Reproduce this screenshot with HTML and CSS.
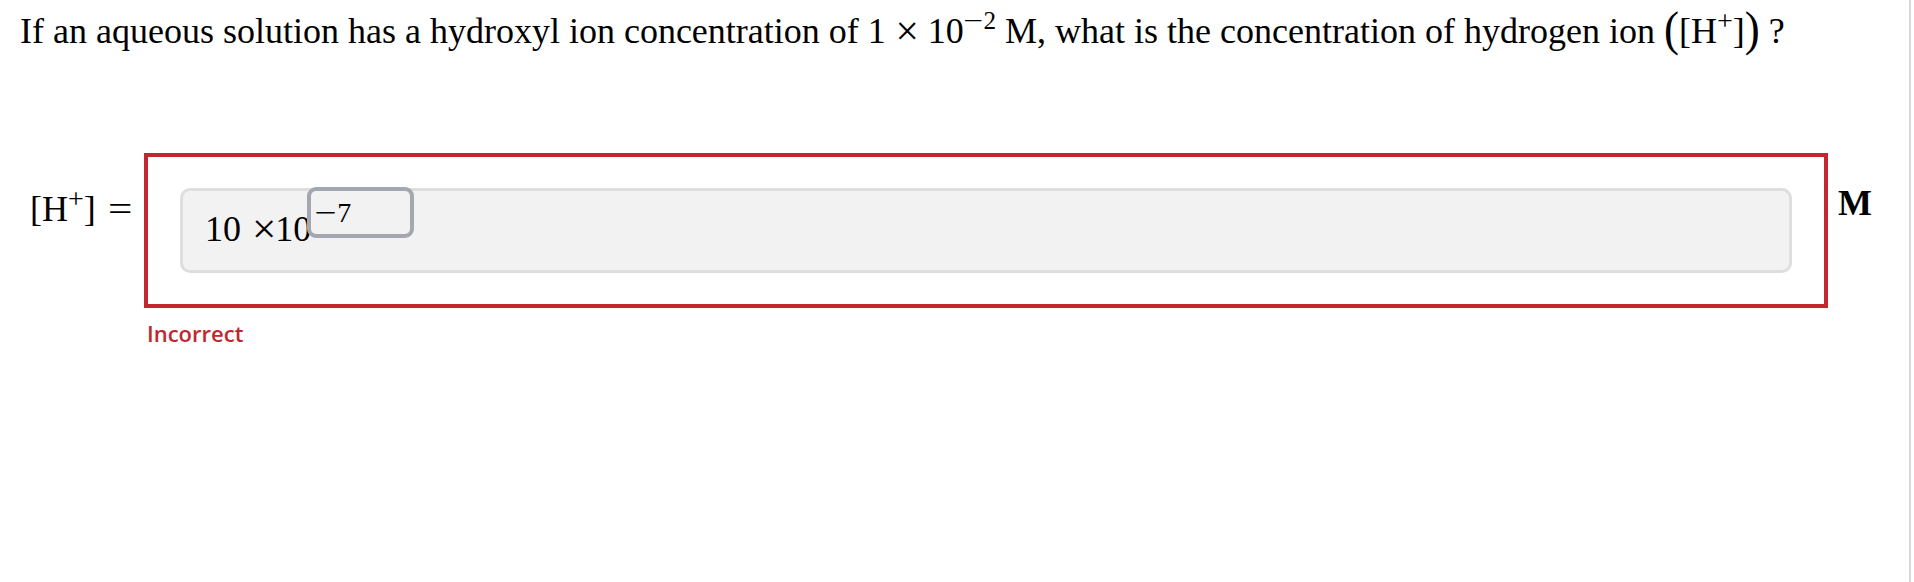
FILE: index.html
```html
<!doctype html>
<html lang="en">
<head>
    <meta charset="UTF-8">
    <title>Hydrogen ion concentration</title>
    <link rel="stylesheet" href="styles.css">
</head>
<body>
<div class="page">
    <p class="question">If an aqueous solution has a hydroxyl ion concentration of <span class="math">1<span class="op">×</span>10<sup><span class="minus">−</span>2</sup> M</span>, what is the concentration of hydrogen ion <span class="math"><span class="paren">(</span>[H<sup class="plus">+</sup>]<span class="paren">)</span></span> ?</p>

    <div class="answer-row">
        <div class="label">[H<sup class="plus">+</sup>]<span class="eq">=</span></div>
        <div class="answer-box">
            <div class="mathfield">
                <span class="entry">10 <span class="times">×</span>10</span>
                <span class="exponent"><span class="minus">−</span>7</span>
            </div>
        </div>
        <div class="unit">M</div>
    </div>
    <div class="feedback">Incorrect</div>
</div>
</body>
</html>
```

FILE: styles.css
```css
body {
    margin: 0;
    background-color: #fff;
    color: #000;
    font-family: "Liberation Serif", "Times New Roman", serif;
}

.page {
    width: 1909px;
    height: 582px;
    border-right: 2px solid #d9d9d9;
    box-sizing: content-box;
}

.question {
    margin: 0;
    padding: 11px 0 0 20px;
    font-size: 36px;
    line-height: 41px;
    white-space: nowrap;
}

sup {
    font-size: 0.7em;
    line-height: 0;
    vertical-align: 0.55em;
}

sup.plus {
    font-size: 0.78em;
    vertical-align: 0.45em;
}

.op {
    display: inline-block;
    margin: 0 0.3em;
    transform: scale(1.15);
}

.minus {
    display: inline-block;
    margin: 0 0.12em 0 0.1em;
    transform: scaleX(1.4);
}

.paren {
    display: inline-block;
    font-size: 1.25em;
    line-height: 0;
    transform: scaleY(1.1);
}

.answer-row {
    display: flex;
    align-items: flex-start;
    margin-top: 101px;
    padding-left: 30px;
}

.label {
    width: 114px;
    padding-top: 36px;
    font-size: 36px;
    line-height: 41px;
    white-space: nowrap;
}

.eq {
    display: inline-block;
    margin-left: 0.4em;
    transform: scaleX(1.2);
}

.answer-box {
    width: 1684px;
    box-sizing: border-box;
    border: 4px solid #c1272d;
    padding: 31px 32px;
}

.mathfield {
    display: flex;
    align-items: flex-start;
    height: 85px;
    box-sizing: border-box;
    border: 3px solid #dedede;
    border-radius: 10px;
    background-color: #f2f2f2;
    padding-left: 22px;
}

.entry {
    margin-top: 18px;
    font-size: 36px;
    line-height: 41px;
    white-space: pre;
}

.times {
    display: inline-block;
    margin: 0 0.02em 0 0.12em;
    transform: scale(1.2);
}

.exponent {
    width: 107px;
    height: 51px;
    box-sizing: border-box;
    margin: -4px 0 0 -4px;
    padding: 7px 0 0 4px;
    border: 4px solid #a2a7b0;
    border-radius: 9px;
    font-size: 28px;
    line-height: 30px;
}

.unit {
    margin-left: 10px;
    padding-top: 30px;
    font-size: 36px;
    line-height: 41px;
    font-weight: bold;
}

.feedback {
    margin: 10px 0 0 147px;
    font-family: "Open Sans", sans-serif;
    font-weight: 600;
    font-size: 22px;
    color: #c1272d;
}
```
